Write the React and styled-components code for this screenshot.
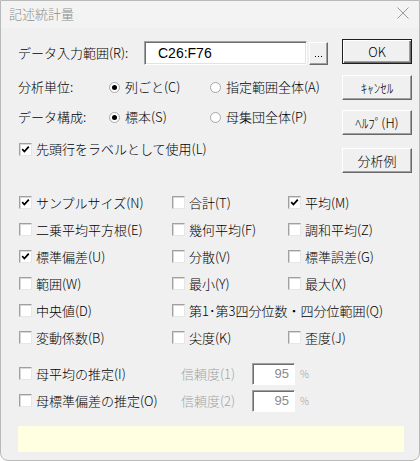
import React from 'react';
import styled, { createGlobalStyle } from 'styled-components';

const GlobalStyle = createGlobalStyle`
  html, body {
    margin: 0;
    padding: 0;
    background: #ffffff;
  }
  body {
    font-family: "Noto Sans CJK JP", "Noto Sans", sans-serif;
  }
`;

/**
 * WINDOW FRAME
 */
const Window = styled.div`
  width: 420px;
  height: 461px;
  box-sizing: border-box;
  border: 1px solid #b9b9b9;
  border-radius: 0 0 8px 8px;
  background: #f0f0f0;
  display: flex;
  flex-direction: column;
  overflow: hidden;
  font-size: 13px;
  font-weight: 300;
  line-height: 16px;
  color: #000;
`;

const TitleBar = styled.div`
  height: 27px;
  box-sizing: border-box;
  display: flex;
  align-items: flex-start;
  justify-content: space-between;
  padding: 5px 10px 0 8px;
  background: #f3f3f3;
`;

const Title = styled.span`
  font-size: 13px;
  line-height: 15px;
  color: #8c8c8c;
`;

const CloseIcon = styled.svg`
  margin-top: 1px;
`;

const Body = styled.div`
  padding: 11px 7px 0 17px;
  display: flex;
  flex-direction: column;
`;

/**
 * TOP SECTION: input range, radios, action buttons
 */
const Top = styled.div`
  display: flex;
  justify-content: space-between;
  align-items: flex-start;
`;

const Fields = styled.div`
  display: flex;
  flex-direction: column;
`;

const Field = styled.div`
  display: flex;
  align-items: center;
  height: ${({ $h }) => $h}px;
  margin-top: ${({ $mt }) => $mt || 0}px;
  padding-left: ${({ $pl }) => $pl || 0}px;
`;

const FieldLabel = styled.span`
  width: ${({ $w }) => $w}px;
  flex-shrink: 0;
  white-space: nowrap;
`;

const RangeInput = styled.div`
  width: 163px;
  height: 24px;
  box-sizing: border-box;
  background: #fff;
  border-style: solid;
  border-width: 1px;
  border-color: #a0a0a0 #ffffff #ffffff #a0a0a0;
  box-shadow: inset 1px 1px 0 #6e6e6e, inset -1px -1px 0 #e3e3e3;
  display: flex;
  align-items: center;
  padding-left: 13px;
  font-family: "Liberation Sans", Arial, sans-serif;
  font-weight: 400;
  font-size: 14px;
  color: #000;
  align-self: flex-start;
`;

const SmallButton = styled.div`
  width: 19px;
  height: 23px;
  box-sizing: border-box;
  margin: 1px 0 0 2px;
  align-self: flex-start;
  background: #f0f0f0;
  border-style: solid;
  border-width: 1px;
  border-color: #ffffff #696969 #696969 #ffffff;
  box-shadow: inset -1px -1px 0 #a0a0a0;
  display: flex;
  justify-content: center;
  gap: 2px;
  padding-top: 13px;
`;

const Dot = styled.span`
  width: 1px;
  height: 1px;
  background: #000;
`;

const RadioOption = styled.label`
  display: flex;
  align-items: center;
  width: ${({ $w }) => ($w ? `${$w}px` : 'auto')};
  white-space: nowrap;
`;

const RadioCircle = styled.span`
  width: 11px;
  height: 11px;
  box-sizing: border-box;
  border-radius: 50%;
  border: 1px solid #a8a8a8;
  background: #fff;
  display: flex;
  align-items: center;
  justify-content: center;
  margin-right: 5px;
  flex-shrink: 0;
  &::after {
    content: '';
    width: 5px;
    height: 5px;
    border-radius: 50%;
    background: ${({ $on }) => ($on ? '#000' : 'transparent')};
  }
`;

const ButtonColumn = styled.div`
  width: 70px;
  display: flex;
  flex-direction: column;
`;

const DialogButton = styled.div`
  height: 25px;
  box-sizing: border-box;
  margin-top: ${({ $mt }) => $mt || 0}px;
  background: #f0f0f0;
  display: flex;
  align-items: center;
  justify-content: center;
  white-space: nowrap;
  font-size: 13px;
  ${({ $isDefault }) => (
    $isDefault ?
      `
        border: 1px solid #1e1e1e;
        box-shadow: inset 1px 1px 0 #ffffff, inset -1px -1px 0 #696969, inset -2px -2px 0 #a0a0a0;
      ` :
      `
        border-style: solid;
        border-width: 1px;
        border-color: #ffffff #696969 #696969 #ffffff;
        box-shadow: inset -1px -1px 0 #a0a0a0;
      `
  )}
`;

/**
 * CHECKBOXES
 */
const CheckItem = styled.label`
  display: flex;
  align-items: center;
  white-space: nowrap;
  width: ${({ $w }) => ($w ? `${$w}px` : 'auto')};
  flex-shrink: 0;
`;

const CheckBox = styled.span`
  width: 13px;
  height: 13px;
  box-sizing: border-box;
  flex-shrink: 0;
  background: #fff;
  border-style: solid;
  border-width: 1px;
  border-color: #a0a0a0 #e6e6e6 #e6e6e6 #a0a0a0;
  box-shadow: inset 1px 1px 0 #d8d8d8;
  margin-right: 4px;
  display: flex;
  align-items: center;
  justify-content: center;
`;

const StatGrid = styled.div`
  margin: 16px 0 0 1px;
  display: grid;
  grid-template-columns: 153px 116px 1fr;
  grid-auto-rows: 27px;
  align-items: center;
`;

const EstimateList = styled.div`
  margin: 9px 0 0 1px;
  display: flex;
  flex-direction: column;
`;

const EstimateRow = styled.div`
  height: 27px;
  display: flex;
  align-items: center;
`;

const DisabledLabel = styled.span`
  width: 71px;
  flex-shrink: 0;
  color: #a3a3a3;
  white-space: nowrap;
`;

const NumberBox = styled.div`
  width: 43px;
  height: 22px;
  box-sizing: border-box;
  background: #fff;
  border-style: solid;
  border-width: 1px;
  border-color: #a0a0a0 #ffffff #ffffff #a0a0a0;
  box-shadow: inset 1px 1px 0 #6e6e6e;
  display: flex;
  align-items: center;
  justify-content: flex-end;
  padding-right: 5px;
  font-family: "Liberation Sans", Arial, sans-serif;
  font-weight: 400;
  font-size: 13px;
  color: #8a8a8a;
`;

const Unit = styled.span`
  margin-left: 5px;
  font-size: 10px;
  color: #a3a3a3;
`;

const InfoBox = styled.div`
  margin-top: 12px;
  width: 386px;
  height: 26px;
  background: #ffffe1;
`;

const Check = ({ checked }) => (
  <CheckBox>
    {checked && (
      <svg width="9" height="9" viewBox="0 0 9 9">
        <path d="M1.2 4.2 L3.4 6.5 L7.8 1.6" fill="none" stroke="#000" strokeWidth="1.8" />
      </svg>
    )}
  </CheckBox>
);

const stats = [
  ['サンプルサイズ(N)', true], ['合計(T)', false], ['平均(M)', true],
  ['二乗平均平方根(E)', false], ['幾何平均(F)', false], ['調和平均(Z)', false],
  ['標準偏差(U)', true], ['分散(V)', false], ['標準誤差(G)', false],
  ['範囲(W)', false], ['最小(Y)', false], ['最大(X)', false],
  ['中央値(D)', false], ['第1･第3四分位数・四分位範囲(Q)', false], [null, false],
  ['変動係数(B)', false], ['尖度(K)', false], ['歪度(J)', false],
];

const estimates = [
  ['母平均の推定(I)', '信頼度(1)'],
  ['母標準偏差の推定(O)', '信頼度(2)'],
];

/**
 * MAIN COMPONENT
 */
const App = () => (
  <>
    <GlobalStyle />
    <Window>
      <TitleBar>
        <Title>記述統計量</Title>
        <CloseIcon width="12" height="12" viewBox="0 0 12 12">
          <path d="M0.5 0.5 L11.5 11.5 M11.5 0.5 L0.5 11.5" stroke="#9a9a9a" strokeWidth="1" />
        </CloseIcon>
      </TitleBar>
      <Body>
        <Top>
          <Fields>
            <Field $h={24} $mt={2}>
              <FieldLabel $w={126}>データ入力範囲(R):</FieldLabel>
              <RangeInput>C26:F76</RangeInput>
              <SmallButton><Dot /><Dot /><Dot /></SmallButton>
            </Field>
            <Field $h={30} $mt={7}>
              <FieldLabel $w={91}>分析単位:</FieldLabel>
              <RadioOption $w={101}><RadioCircle $on />列ごと(C)</RadioOption>
              <RadioOption><RadioCircle />指定範囲全体(A)</RadioOption>
            </Field>
            <Field $h={30}>
              <FieldLabel $w={91}>データ構成:</FieldLabel>
              <RadioOption $w={101}><RadioCircle $on />標本(S)</RadioOption>
              <RadioOption><RadioCircle />母集団全体(P)</RadioOption>
            </Field>
            <Field $h={30} $mt={2} $pl={1}>
              <CheckItem><Check checked />先頭行をラベルとして使用(L)</CheckItem>
            </Field>
          </Fields>
          <ButtonColumn>
            <DialogButton $isDefault>OK</DialogButton>
            <DialogButton $mt={11}>ｷｬﾝｾﾙ</DialogButton>
            <DialogButton $mt={10}>ﾍﾙﾌﾟ(H)</DialogButton>
            <DialogButton $mt={13}>分析例</DialogButton>
          </ButtonColumn>
        </Top>

        <StatGrid>
          {
            stats.map(([label, checked], idx) => (
              label ?
                <CheckItem key={idx}><Check checked={checked} />{label}</CheckItem> :
                <span key={idx} />
            ))
          }
        </StatGrid>

        <EstimateList>
          {
            estimates.map(([label, level]) => (
              <EstimateRow key={label}>
                <CheckItem $w={162}><Check />{label}</CheckItem>
                <DisabledLabel>{level}</DisabledLabel>
                <NumberBox>95</NumberBox>
                <Unit>%</Unit>
              </EstimateRow>
            ))
          }
        </EstimateList>

        <InfoBox />
      </Body>
    </Window>
  </>
);

export default App;
